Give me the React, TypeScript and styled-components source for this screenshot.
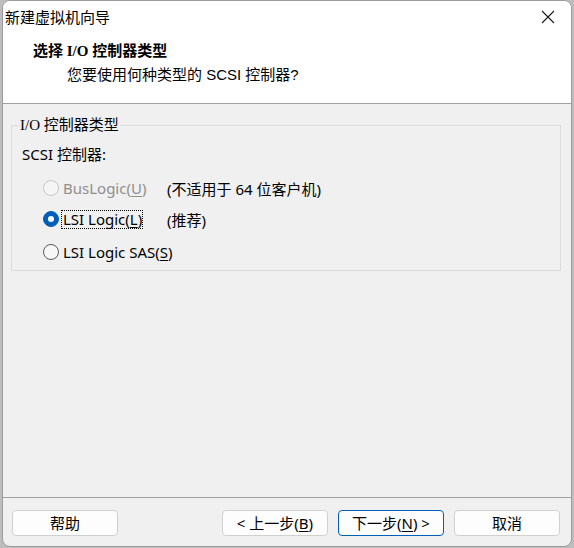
import React from "react";
import styled, { createGlobalStyle } from "styled-components";

const Global = createGlobalStyle`
  html, body { margin: 0; padding: 0; background: #bdbdbd; }
  body { width: 574px; height: 548px; overflow: hidden; }
  * { box-sizing: border-box; }
`;

const UI = `"Noto Sans", "Noto Sans CJK SC", sans-serif`;

const Window = styled.div`
  margin-left: 2px;
  width: 570px;
  height: 547px;
  border: 1px solid #9c9c9c;
  border-radius: 8px;
  background: #f0f0f0;
  display: flex;
  flex-direction: column;
  overflow: hidden;
  font-family: ${UI};
  font-size: 15px;
  color: #000;
`;

const TitleBar = styled.div`
  height: 32px;
  background: #fff;
  display: flex;
  align-items: center;
  padding-left: 2px;
`;

const Title = styled.div`
  flex: 1;
  font-family: "Noto Sans CJK SC", sans-serif;
  font-size: 15px;
  line-height: 20px;
`;

const CloseBtn = styled.div`
  width: 46px;
  height: 32px;
  display: flex;
  align-items: center;
  justify-content: center;
`;

const Header = styled.div`
  height: 71px;
  background: #fff;
  padding: 8px 0 0 30px;
  border-bottom: 1px solid #a0a0a0;
`;

const Heading = styled.div`
  font-family: "Liberation Serif", "Noto Sans CJK SC", serif;
  font-weight: bold;
  font-size: 15px;
  line-height: 20px;
`;

const SubTitle = styled.div`
  margin-top: 4px;
  padding-left: 34px;
  font-family: "Liberation Sans", "Noto Sans CJK SC", sans-serif;
  font-size: 15px;
  line-height: 20px;
`;

const Body = styled.div`
  flex: 1;
  padding: 11px 10px 0 8px;
`;

const Group = styled.fieldset`
  margin: 0;
  padding: 0 0 8px 0;
  border: 1px solid #dcdcdc;
  height: 156px;
`;

const Legend = styled.legend`
  margin-left: 7px;
  padding: 0 1px;
  line-height: 20px;
  font-family: "Liberation Serif", "Noto Sans CJK SC", serif;
  font-size: 15px;
`;

const Caption = styled.div`
  margin: 9px 0 0 10px;
  line-height: 20px;
`;

const Row = styled.div<{ $mt: number }>`
  margin-top: ${(p) => p.$mt}px;
  display: flex;
  align-items: center;
  height: 20px;
  padding-left: 31px;
`;

const Radio = styled.span<{ $checked?: boolean; $disabled?: boolean }>`
  width: 16px;
  height: 16px;
  border-radius: 50%;
  flex: none;
  position: relative;
  background: ${(p) => (p.$checked ? "#005fb8" : p.$disabled ? "#f5f5f5" : "#f7f7f7")};
  border: 1px solid ${(p) => (p.$checked ? "#005fb8" : p.$disabled ? "#c6c6c6" : "#5c5c5c")};
  &::after {
    content: "";
    display: ${(p) => (p.$checked ? "block" : "none")};
    position: absolute;
    left: 4px;
    top: 4px;
    width: 6px;
    height: 6px;
    border-radius: 50%;
    background: #fff;
  }
`;

const RadioLabel = styled.span<{ $disabled?: boolean; $focus?: boolean; $w: number }>`
  margin-left: 3px;
  width: ${(p) => p.$w}px;
  flex: none;
  color: ${(p) => (p.$disabled ? "#8f8f8f" : "#000")};
  line-height: 17px;
  padding: 0 1px;
  outline: ${(p) => (p.$focus ? "1px dotted #000" : "none")};
  white-space: nowrap;
`;

const Note = styled.span`
  margin-left: 25px;
  font-family: "Noto Sans", "Noto Sans CJK SC", sans-serif;
  white-space: pre;
`;

const Footer = styled.div`
  border-top: 1px solid #a0a0a0;
  padding: 12px 11px 10px 9px;
  display: flex;
  align-items: center;
`;

const Button = styled.button<{ $default?: boolean }>`
  width: 106px;
  height: 26px;
  border-radius: 4px;
  border: 1px solid ${(p) => (p.$default ? "#005fb8" : "#d0d0d0")};
  background: #fdfdfd;
  font-family: ${UI};
  font-size: 15px;
  color: #000;
  padding: 0;
  line-height: 22px;
  & + & { margin-left: 10px; }
`;

const Spacer = styled.div`
  flex: 1;
`;

const U = styled.span`
  text-decoration: underline;
  text-underline-offset: 2px;
`;

export default function App() {
  return (
    <>
      <Global />
      <Window>
        <TitleBar>
          <Title>新建虚拟机向导</Title>
          <CloseBtn>
            <svg width="14" height="14" viewBox="0 0 14 14">
              <path d="M1 1L13 13M13 1L1 13" stroke="#1a1a1a" strokeWidth="1.1" />
            </svg>
          </CloseBtn>
        </TitleBar>
        <Header>
          <Heading>选择 I/O 控制器类型</Heading>
          <SubTitle>您要使用何种类型的 SCSI 控制器?</SubTitle>
        </Header>
        <Body>
          <Group>
            <Legend>I/O 控制器类型</Legend>
            <Caption>SCSI 控制器:</Caption>
            <Row $mt={14}>
              <Radio $disabled />
              <RadioLabel $disabled $w={80}>
                BusLogic(<U>U</U>)
              </RadioLabel>
              <Note>(不适用于 64 位客户机)</Note>
            </Row>
            <Row $mt={11}>
              <Radio $checked />
              <RadioLabel $focus $w={80}>
                LSI Logic(<U>L</U>)
              </RadioLabel>
              <Note>(推荐)</Note>
            </Row>
            <Row $mt={13}>
              <Radio />
              <RadioLabel $w={120}>
                LSI Logic SAS(<U>S</U>)
              </RadioLabel>
            </Row>
          </Group>
        </Body>
        <Footer>
          <Button>帮助</Button>
          <Spacer />
          <Button>
            &lt; 上一步(<U>B</U>)
          </Button>
          <Button $default>
            下一步(<U>N</U>) &gt;
          </Button>
          <Button>取消</Button>
        </Footer>
      </Window>
    </>
  );
}
